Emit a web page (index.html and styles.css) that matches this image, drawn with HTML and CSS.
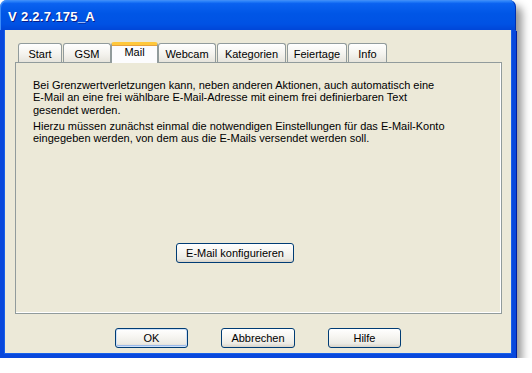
FILE: index.html
```html
<!DOCTYPE html>
<html lang="de">
<head>
  <meta charset="UTF-8" />
  <title>V 2.2.7.175_A</title>
  <link rel="stylesheet" href="styles.css">
</head>
<body>
  <div class="window">
    <div class="titlebar">
      <span class="title">V 2.2.7.175_A</span>
    </div>

    <div class="client">
      <!-- Reiter -->
      <div class="tabs">
        <span class="tab tab-start">Start</span>
        <span class="tab tab-gsm">GSM</span>
        <span class="tab tab-mail active">Mail</span>
        <span class="tab tab-webcam">Webcam</span>
        <span class="tab tab-kat">Kategorien</span>
        <span class="tab tab-feier">Feiertage</span>
        <span class="tab tab-info">Info</span>
      </div>

      <div class="panel">
        <p>Bei Grenzwertverletzungen kann, neben anderen Aktionen, auch automatisch eine<br>E-Mail an eine frei wählbare E-Mail-Adresse mit einem frei definierbaren Text<br>gesendet werden.</p>
        <p>Hierzu müssen zunächst einmal die notwendigen Einstellungen für das E-Mail-Konto<br>eingegeben werden, von dem aus die E-Mails versendet werden soll.</p>
        <button class="btn btn-config">E-Mail konfigurieren</button>
      </div>

      <div class="actions">
        <button class="btn btn-default btn-ok">OK</button>
        <button class="btn btn-cancel">Abbrechen</button>
        <button class="btn btn-help">Hilfe</button>
      </div>
    </div>
  </div>
</body>
</html>
```

FILE: styles.css
```css
body {
  margin: 0;
  background-color: #fff;
  font-family: "Liberation Sans", Arial, sans-serif;
  font-size: 11px;
  color: #000;
}

.window {
  width: 516px;
  height: 358px;
  display: flex;
  flex-direction: column;
  border-radius: 7px 7px 0 0;
  box-shadow: 6px 6px 9px rgba(0,0,0,0.42);
}

.titlebar {
  height: 30px;
  flex-shrink: 0;
  border-radius: 7px 7px 0 0;
  background: linear-gradient(to bottom, #3d95ff 0%, #0a62f0 12%, #0056e6 45%, #0052e4 80%, #0046d8 100%);
  box-shadow: inset 1px 1px 0 #3c8cf8, inset -1px 0 0 #0030b0;
  display: flex;
  align-items: center;
  padding: 2px 0 0 8px;
  box-sizing: border-box;
}

.title {
  color: #fff;
  font-weight: bold;
  font-size: 13px;
  letter-spacing: 0.3px;
  text-shadow: 1px 1px 0 #0a1e8a;
}

.client {
  flex: 1;
  background-color: #ece9d8;
  border: 4px solid #0848dc;
  border-top: none;
  box-shadow: inset 1px 0 0 #1660ea, inset -1px -1px 0 #1660ea, 1px 1px 0 #001ea0, -1px 0 0 #0030c0;
  display: flex;
  flex-direction: column;
}

.tabs {
  display: flex;
  align-items: flex-end;
  height: 20px;
  margin-top: 12px;
  padding-left: 14px;
}

.tab {
  height: 19px;
  box-sizing: border-box;
  margin-right: 1px;
  border: 1px solid #919b9c;
  border-bottom: none;
  border-radius: 3px 3px 0 0;
  background: linear-gradient(to bottom, #ffffff 0%, #f4f3ee 55%, #e6e4dc 100%);
  display: flex;
  align-items: center;
  justify-content: center;
  padding-top: 1px;
}

.tab.active {
  height: 21px;
  margin-bottom: -1px;
  position: relative;
  z-index: 1;
  background: #fcfcfe;
  border-top: 3px solid #ffc83c;
  box-shadow: inset 0 1px 0 #e6a13c;
  align-items: flex-start;
  padding-top: 1px;
}

.tab-start { width: 44px; }
.tab-gsm { width: 48px; margin-right: 0; }
.tab-mail { width: 47px; margin-right: 0; }
.tab-webcam { width: 58px; }
.tab-kat { width: 69px; }
.tab-feier { width: 60px; }
.tab-info { width: 39px; }

.panel {
  width: 487px;
  height: 252px;
  box-sizing: border-box;
  margin-left: 11px;
  border: 1px solid #919b9c;
  box-shadow: inset -1px -1px 0 #fff;
  padding: 16px 17px 0;
}

.panel p {
  margin: 0 0 4px;
  line-height: 12.3px;
  white-space: nowrap;
}

.btn {
  height: 20px;
  box-sizing: border-box;
  font-family: "Liberation Sans", Arial, sans-serif;
  font-size: 11px;
  color: #000;
  border: 1px solid #003c74;
  border-radius: 3px;
  background: linear-gradient(to bottom, #ffffff 0%, #f7f6f2 40%, #ecebe5 80%, #d8d3c8 100%);
  padding: 0;
}

.btn-config {
  width: 118px;
  margin-top: 95px;
  margin-left: 143px;
}

.btn-default {
  box-shadow: inset 0 0 0 1px #cde0f8, inset 0 -1px 0 1px #9bbaea;
}

.actions {
  display: flex;
  gap: 33px;
  margin-top: 14px;
  padding-left: 111px;
}

.btn-ok { width: 73px; }
.btn-cancel { width: 74px; }
.btn-help { width: 73px; }
```
